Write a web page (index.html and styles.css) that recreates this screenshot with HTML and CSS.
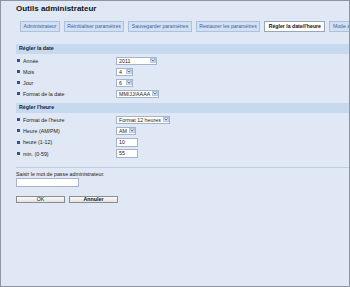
FILE: index.html
```html
<!DOCTYPE html>
<html lang="fr">
<head>
<meta charset="utf-8">
<title>Outils administrateur</title>
<link rel="stylesheet" href="styles.css">
</head>
<body>
<div class="frame">
  <h1 class="title">Outils administrateur</h1>
  <div class="tabs">
    <span class="tab">Administrateur</span>
    <span class="tab">Réinitialiser paramètres</span>
    <span class="tab">Sauvegarder paramètres</span>
    <span class="tab">Restaurer les paramètres</span>
    <span class="tab active">Régler la date/l'heure</span>
    <span class="tab">Mode avancé</span>
  </div>

  <div class="section">
    <div class="section-head">Régler la date</div>
    <div class="rows rows-date">
      <span class="label"><i class="bullet"></i>Année</span>
      <span class="select w-year"><span class="value">2011</span><span class="arrow"><svg viewBox="0 0 4 3" width="4" height="3"><polyline points="0.4,0.5 2,2.2 3.6,0.5" fill="none" stroke="#3a5a9a" stroke-width="0.9"/></svg></span></span>
      <span class="label"><i class="bullet"></i>Mois</span>
      <span class="select w-small"><span class="value">4</span><span class="arrow"><svg viewBox="0 0 4 3" width="4" height="3"><polyline points="0.4,0.5 2,2.2 3.6,0.5" fill="none" stroke="#3a5a9a" stroke-width="0.9"/></svg></span></span>
      <span class="label"><i class="bullet"></i>Jour</span>
      <span class="select w-small"><span class="value">6</span><span class="arrow"><svg viewBox="0 0 4 3" width="4" height="3"><polyline points="0.4,0.5 2,2.2 3.6,0.5" fill="none" stroke="#3a5a9a" stroke-width="0.9"/></svg></span></span>
      <span class="label"><i class="bullet"></i>Format de la date</span>
      <span class="select w-datefmt"><span class="value">MM/JJ/AAAA</span><span class="arrow"><svg viewBox="0 0 4 3" width="4" height="3"><polyline points="0.4,0.5 2,2.2 3.6,0.5" fill="none" stroke="#3a5a9a" stroke-width="0.9"/></svg></span></span>
    </div>
  </div>

  <div class="section">
    <div class="section-head">Régler l'heure</div>
    <div class="rows rows-time">
      <span class="label"><i class="bullet"></i>Format de l'heure</span>
      <span class="select w-timefmt"><span class="value">Format 12 heures</span><span class="arrow"><svg viewBox="0 0 4 3" width="4" height="3"><polyline points="0.4,0.5 2,2.2 3.6,0.5" fill="none" stroke="#3a5a9a" stroke-width="0.9"/></svg></span></span>
      <span class="label"><i class="bullet"></i>Heure (AM/PM)</span>
      <span class="select w-ampm"><span class="value">AM</span><span class="arrow"><svg viewBox="0 0 4 3" width="4" height="3"><polyline points="0.4,0.5 2,2.2 3.6,0.5" fill="none" stroke="#3a5a9a" stroke-width="0.9"/></svg></span></span>
      <span class="label"><i class="bullet"></i>heure (1-12)</span>
      <span class="field w-num">10</span>
      <span class="label"><i class="bullet"></i>min. (0-59)</span>
      <span class="field w-num">55</span>
    </div>
  </div>

  <div class="auth">
    <div class="auth-label">Saisir le mot de passe administrateur.</div>
    <span class="field w-pass"></span>
    <div class="buttons">
      <span class="btn">OK</span>
      <span class="btn btn-bold">Annuler</span>
    </div>
  </div>
</div>
</body>
</html>
```

FILE: styles.css
```css
html, body {
  margin: 0;
  padding: 0;
}

body {
  font-family: "Liberation Sans", Arial, sans-serif;
  color: #1c1c1c;
  background: #dfe8f4;
}

.frame {
  width: 350px;
  height: 287px;
  box-sizing: border-box;
  border: 1px solid #8b95a3;
  background: #dfe8f4;
  padding: 3px 0 0 15px;
  overflow: hidden;
}

.title {
  margin: 0;
  font-size: 8px;
  line-height: 10px;
  font-weight: bold;
  color: #151515;
}

.tabs {
  display: flex;
  gap: 4px;
  margin: 7px 0 0 4px;
  white-space: nowrap;
}

.tab {
  flex: none;
  height: 11px;
  box-sizing: border-box;
  padding: 0 2.5px;
  border: 1px solid #aec1dc;
  background: #d3e0f1;
  color: #3d5ea8;
  font-size: 5.1px;
  line-height: 9px;
}

.tab.active {
  background: #ffffff;
  border-color: #9aa6b6;
  color: #111;
  font-weight: bold;
  font-size: 5.2px;
  padding: 0 3.5px;
}

.section {
  margin-top: 12px;
}

.section + .section {
  margin-top: 4px;
}

.section-head {
  height: 9.5px;
  background: #c7d9ef;
  font-size: 5.3px;
  font-weight: bold;
  line-height: 9.5px;
  padding-left: 3px;
  color: #1a1a1a;
  margin-bottom: 1.5px;
}

.rows {
  display: grid;
  grid-template-columns: 100px auto;
  align-items: center;
  justify-items: start;
}

.rows-date {
  grid-auto-rows: 11px;
}

.rows-time {
  grid-auto-rows: 11.33px;
}

.label {
  display: flex;
  align-items: center;
  font-size: 5.3px;
  padding-left: 1px;
  color: #222;
}

.bullet {
  width: 3px;
  height: 3px;
  background: #34528e;
  margin-right: 3px;
}

.select {
  display: flex;
  height: 8px;
  box-sizing: border-box;
  border: 1px solid #a3b4cc;
  background: #fff;
}

.select .value {
  flex: 1;
  font-size: 5.3px;
  line-height: 6px;
  padding-left: 2px;
  white-space: nowrap;
  overflow: hidden;
}

.select .arrow {
  width: 6px;
  margin: 0.5px;
  box-sizing: border-box;
  border: 1px solid #b6c7de;
  background: #dbe6f5;
  display: flex;
  align-items: center;
  justify-content: center;
}

.select .arrow svg {
  display: block;
}

.w-year { width: 41px; }
.w-small { width: 17px; }
.w-datefmt { width: 43px; }
.w-timefmt { width: 54px; }
.w-ampm { width: 20px; }

.field {
  display: block;
  height: 8.5px;
  box-sizing: border-box;
  border: 1px solid #a3b4cc;
  background: #fff;
  font-size: 5.3px;
  line-height: 6.5px;
  padding-left: 2px;
}

.w-num { width: 22px; }

.auth {
  margin-top: 8px;
  border-top: 1px solid #bfcde0;
  padding-top: 3px;
}

.auth-label {
  font-size: 5.3px;
  line-height: 6.5px;
  color: #222;
}

.w-pass {
  width: 63px;
  height: 9px;
}

.buttons {
  display: flex;
  gap: 4px;
  margin-top: 9px;
}

.btn {
  width: 49px;
  height: 7.5px;
  box-sizing: border-box;
  border: 1px solid #8d8d8d;
  background: linear-gradient(#fafafa, #e2e2e2);
  font-size: 5.3px;
  line-height: 5.5px;
  text-align: center;
  color: #111;
}

.btn-bold {
  font-weight: bold;
}
```
